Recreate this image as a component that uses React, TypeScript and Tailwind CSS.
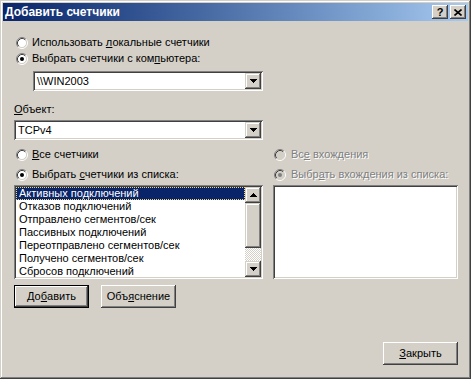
import React from 'react';

// classic 3D edges
const RAISED_BTN = 'shadow-[inset_-1px_-1px_#404040,inset_1px_1px_#ffffff,inset_-2px_-2px_#808080,inset_2px_2px_#d4d0c8]';
const RAISED_FRAME = 'shadow-[inset_-1px_-1px_#404040,inset_1px_1px_#d4d0c8,inset_-2px_-2px_#808080,inset_2px_2px_#ffffff]';
const SUNKEN = 'shadow-[inset_1px_1px_#808080,inset_-1px_-1px_#ffffff,inset_2px_2px_#404040,inset_-2px_-2px_#d4d0c8]';
const DISABLED = 'text-[#808080] [text-shadow:1px_1px_0_#ffffff]';

const U = ({ children }: { children: React.ReactNode }) => <span className="underline underline-offset-1">{children}</span>;

const Radio = ({ checked, disabled }: { checked?: boolean; disabled?: boolean }) => (
  <svg width="12" height="12" viewBox="0 0 12 12" className="shrink-0">
    <circle cx="6" cy="6" r="4.5" fill={disabled ? '#d4d0c8' : '#ffffff'} />
    <path d="M2.11 9.89A5.5 5.5 0 0 1 9.89 2.11" stroke="#808080" fill="none" />
    <path d="M2.82 9.18A4.5 4.5 0 0 1 9.18 2.82" stroke="#404040" fill="none" />
    <path d="M9.89 2.11A5.5 5.5 0 0 1 2.11 9.89" stroke="#ffffff" fill="none" />
    <path d="M9.18 2.82A4.5 4.5 0 0 1 2.82 9.18" stroke="#d4d0c8" fill="none" />
    {checked && <circle cx="6" cy="6" r="2" fill={disabled ? '#808080' : '#000000'} />}
  </svg>
);

const ArrowDown = () => (
  <svg width="7" height="4" viewBox="0 0 7 4" shapeRendering="crispEdges">
    <polygon points="0,0 7,0 3.5,4" fill="#000" />
  </svg>
);
const ArrowUp = () => (
  <svg width="7" height="4" viewBox="0 0 7 4" shapeRendering="crispEdges">
    <polygon points="0,4 7,4 3.5,0" fill="#000" />
  </svg>
);

const ScrollBtn = ({ children }: { children: React.ReactNode }) => (
  <div className={`w-[16px] h-[16px] shrink-0 bg-[#d4d0c8] flex items-center justify-center ${RAISED_FRAME}`}>{children}</div>
);

const Combo = ({ value, className }: { value: string; className: string }) => (
  <div className={`flex h-[20px] bg-white p-[2px] ${SUNKEN} ${className}`}>
    <div className="flex-1 pl-[2px] flex items-center">{value}</div>
    <ScrollBtn><ArrowDown /></ScrollBtn>
  </div>
);

const Btn = ({ children, def, className = '' }: { children: React.ReactNode; def?: boolean; className?: string }) => (
  <div className={`h-[23px] w-[75px] ${def ? 'border border-black' : ''} ${className}`}>
    <div className={`h-full w-full flex items-center justify-center bg-[#d4d0c8] ${RAISED_BTN}`}>{children}</div>
  </div>
);

const COUNTERS = [
  'Активных подключений',
  'Отказов подключений',
  'Отправлено сегментов/сек',
  'Пассивных подключений',
  'Переотправлено сегментов/сек',
  'Получено сегментов/сек',
  'Сбросов подключений',
];

export default function App() {
  return (
    <div className={`w-[471px] h-[379px] bg-[#d4d0c8] p-[3px] flex flex-col text-[11px] leading-[13px] text-black font-['Liberation_Sans',Arial,sans-serif] ${RAISED_FRAME}`}>
      {/* title bar */}
      <div className="h-[18px] flex items-center bg-linear-to-r from-[#0a246a] to-[#a6caf0] pl-[2px] pr-[2px]">
        <span className="flex-1 text-white font-bold text-[12px]">Добавить счетчики</span>
        <div className={`w-[16px] h-[14px] bg-[#d4d0c8] flex items-center justify-center font-bold text-[11px] ${RAISED_BTN}`}>?</div>
        <div className={`w-[16px] h-[14px] ml-[2px] bg-[#d4d0c8] flex items-center justify-center ${RAISED_BTN}`}>
          <svg width="8" height="7" viewBox="0 0 8 7">
            <path d="M0.5 0.5L7.5 6.5M7.5 0.5L0.5 6.5" stroke="#000" strokeWidth="1.6" />
          </svg>
        </div>
      </div>

      <div className="flex flex-col pl-[11px] pr-[10px]">
        <div className="mt-[15px] h-[13px] flex items-center gap-[4px] pl-[2px]">
          <Radio />
          <span>Использовать <U>л</U>окальные счетчики</span>
        </div>
        <div className="mt-[3px] h-[13px] flex items-center gap-[4px] pl-[2px]">
          <Radio checked />
          <span>Выбрать счетчики с ком<U>п</U>ьютера:</span>
        </div>
        <Combo value="\\WIN2003" className="mt-[6px] ml-[19px] w-[230px]" />

        <div className="mt-[12px] h-[13px]"><U>О</U>бъект:</div>
        <Combo value="TCPv4" className="mt-[4px] w-[249px]" />

        <div className="mt-[8px] h-[13px] flex gap-[10px]">
          <div className="w-[249px] flex items-center gap-[4px] pl-[2px]">
            <Radio />
            <span><U>В</U>се счетчики</span>
          </div>
          <div className="flex items-center gap-[5px] pl-[1px]">
            <Radio disabled />
            <span className={DISABLED}>Вс<U>е</U> вхождения</span>
          </div>
        </div>
        <div className="mt-[7px] h-[13px] flex gap-[10px]">
          <div className="w-[249px] flex items-center gap-[4px] pl-[2px]">
            <Radio checked />
            <span>Выбрать <U>с</U>четчики из списка:</span>
          </div>
          <div className="flex items-center gap-[5px] pl-[1px]">
            <Radio checked disabled />
            <span className={DISABLED}>Выбр<U>а</U>ть вхождения из списка:</span>
          </div>
        </div>

        <div className="mt-[4px] h-[94px] flex gap-[10px]">
          <div className={`w-[249px] bg-white p-[2px] flex ${SUNKEN}`}>
            <div className="flex-1 overflow-hidden">
              {COUNTERS.map((c, i) => (
                <div
                  key={c}
                  className={`h-[13px] pl-[3px] whitespace-nowrap ${i === 0 ? 'bg-[#0a246a] text-white outline-1 outline-dotted outline-[#f0d878] -outline-offset-1' : ''}`}
                >
                  {c}
                </div>
              ))}
            </div>
            <div className="w-[16px] flex flex-col">
              <ScrollBtn><ArrowUp /></ScrollBtn>
              <div className={`h-[45px] bg-[#d4d0c8] ${RAISED_FRAME}`} />
              <div className="flex-1 bg-[repeating-conic-gradient(#d4d0c8_0_25%,#ffffff_0_50%)] bg-[length:2px_2px]" />
              <ScrollBtn><ArrowDown /></ScrollBtn>
            </div>
          </div>
          <div className={`flex-1 bg-white ${SUNKEN}`} />
        </div>

        <div className="mt-[6px] flex gap-[12px]">
          <Btn def>До<U>б</U>авить</Btn>
          <Btn>Объ<U>я</U>снение</Btn>
        </div>

        <div className="mt-[34px] flex justify-end">
          <Btn><span><U>З</U>акрыть</span></Btn>
        </div>
      </div>
    </div>
  );
}
